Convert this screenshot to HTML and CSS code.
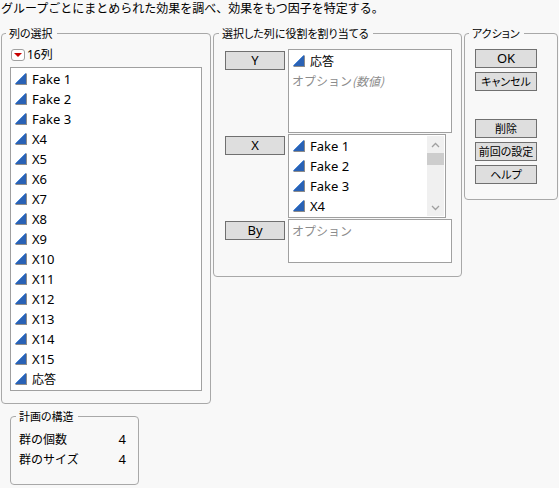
FILE: index.html
```
<!DOCTYPE html>
<html lang="ja">

<head>
    <meta charset="UTF-8">
    <meta name="viewport" content="width=device-width, initial-scale=1.0">
    <title>効果の選別</title>
    <link rel="stylesheet" href="styles.css">
</head>

<body>
    <!-- 連続尺度の三角アイコン -->
    <svg class="defs" width="0" height="0">
        <symbol id="tri" viewBox="0 0 12 12">
            <path d="M12 0V12H0z" fill="#8c8c8c" />
            <path d="M11 0V11H0z" fill="#2a62b5" />
            <path d="M0.5 10.5L10.5 0.5" stroke="#4b87d6" fill="none" />
        </symbol>
    </svg>

    <p class="intro">グループごとにまとめられた効果を調べ、効果をもつ因子を特定する。</p>

    <div class="main">
        <fieldset class="group select">
            <legend>列の選択</legend>
            <div class="count">
                <button class="menu" type="button" aria-label="列のメニュー">
                    <svg width="8" height="4" viewBox="0 0 8 4"><path d="M0 0H8L4 4z" fill="#c80000" /></svg>
                </button>
                <span>16列</span>
            </div>
            <ul class="list">
                <li><svg class="icon"><use href="#tri" /></svg>Fake 1</li>
                <li><svg class="icon"><use href="#tri" /></svg>Fake 2</li>
                <li><svg class="icon"><use href="#tri" /></svg>Fake 3</li>
                <li><svg class="icon"><use href="#tri" /></svg>X4</li>
                <li><svg class="icon"><use href="#tri" /></svg>X5</li>
                <li><svg class="icon"><use href="#tri" /></svg>X6</li>
                <li><svg class="icon"><use href="#tri" /></svg>X7</li>
                <li><svg class="icon"><use href="#tri" /></svg>X8</li>
                <li><svg class="icon"><use href="#tri" /></svg>X9</li>
                <li><svg class="icon"><use href="#tri" /></svg>X10</li>
                <li><svg class="icon"><use href="#tri" /></svg>X11</li>
                <li><svg class="icon"><use href="#tri" /></svg>X12</li>
                <li><svg class="icon"><use href="#tri" /></svg>X13</li>
                <li><svg class="icon"><use href="#tri" /></svg>X14</li>
                <li><svg class="icon"><use href="#tri" /></svg>X15</li>
                <li><svg class="icon"><use href="#tri" /></svg><span class="ja">応答</span></li>
            </ul>
        </fieldset>

        <fieldset class="group roles">
            <legend>選択した列に役割を割り当てる</legend>
            <div class="role">
                <button class="btn" type="button">Y</button>
                <ul class="list tall">
                    <li><svg class="icon"><use href="#tri" /></svg><span class="ja">応答</span></li>
                    <li class="hint ja">オプション<i>(数値)</i></li>
                </ul>
            </div>
            <div class="role">
                <button class="btn" type="button">X</button>
                <div class="list tall scroll">
                    <ul class="items">
                        <li><svg class="icon"><use href="#tri" /></svg>Fake 1</li>
                        <li><svg class="icon"><use href="#tri" /></svg>Fake 2</li>
                        <li><svg class="icon"><use href="#tri" /></svg>Fake 3</li>
                        <li><svg class="icon"><use href="#tri" /></svg>X4</li>
                    </ul>
                    <div class="bar">
                        <button type="button" aria-label="上へ">
                            <svg width="9" height="6" viewBox="0 0 9 6"><path d="M1 5L4.5 1.5L8 5" /></svg>
                        </button>
                        <div class="thumb"></div>
                        <button class="down" type="button" aria-label="下へ">
                            <svg width="9" height="6" viewBox="0 0 9 6"><path d="M1 1L4.5 4.5L8 1" /></svg>
                        </button>
                    </div>
                </div>
            </div>
            <div class="role">
                <button class="btn" type="button">By</button>
                <ul class="list short">
                    <li class="hint ja">オプション</li>
                </ul>
            </div>
        </fieldset>

        <fieldset class="group actions">
            <legend>アクション</legend>
            <div class="btns">
                <button class="btn" type="button">OK</button>
                <button class="btn label" type="button">キャンセル</button>
            </div>
            <div class="btns">
                <button class="btn label" type="button">削除</button>
                <button class="btn label" type="button">前回の設定</button>
                <button class="btn label" type="button">ヘルプ</button>
            </div>
        </fieldset>
    </div>

    <fieldset class="group design">
        <legend>計画の構造</legend>
        <table>
            <tr>
                <th scope="row">群の個数</th>
                <td>4</td>
            </tr>
            <tr>
                <th scope="row">群のサイズ</th>
                <td>4</td>
            </tr>
        </table>
    </fieldset>
</body>

</html>
```

FILE: styles.css
```
* {
    box-sizing: border-box;
}

body,
p,
ul,
li,
fieldset,
legend {
    margin: 0;
    padding: 0;
    list-style: none;
}

body {
    padding: 0 1px;
    background: #f8f8f8;
    color: #000;
    font: 13px/20px "Noto Sans", "Noto Sans CJK JP", sans-serif;
}

button {
    margin: 0;
    padding: 0;
    font: inherit;
    color: inherit;
}

.defs {
    display: block;
}

.ja,
.intro,
th {
    font-family: "Noto Sans CJK JP", sans-serif;
    font-size: 12px;
}

/* 日本語のプロポーショナル字形 */
legend,
.label {
    font-family: "Noto Sans CJK JP", sans-serif;
    font-size: 11px;
    font-feature-settings: "palt";
}

.intro {
    height: 25px;
    line-height: 16px;
    white-space: nowrap;
}

.main {
    display: grid;
    grid-template-columns: 210fr 249fr 94fr;
    gap: 2px;
    align-items: start;
}

.group {
    min-width: 0;
    border: 1px solid #a8a8a8;
    border-radius: 4px;
}

legend {
    padding: 0 4px 0 3px;
    line-height: 16px;
    white-space: nowrap;
}

/* 列の選択 */
.select {
    padding: 4px 8px 12px;
}

.select legend {
    margin-left: -4px;
}

.count {
    display: flex;
    align-items: center;
    gap: 2px;
    margin-bottom: 2px;
    font-size: 12px;
}

.menu {
    display: flex;
    flex: none;
    align-items: center;
    justify-content: center;
    width: 14px;
    height: 12px;
    margin-left: 1px;
    border: 1px solid #a0a0a0;
    border-radius: 3px;
    background: #fff;
}

.list {
    padding: 1px;
    border: 1px solid #a0a0a0;
    background: #fff;
}

.list li {
    display: flex;
    align-items: center;
    height: 20px;
    padding-left: 3px;
}

.icon {
    width: 12px;
    height: 12px;
    margin-right: 5px;
}

.list .hint {
    padding-left: 2px;
    color: #8c8c8c;
}

/* 役割 */
.roles {
    display: grid;
    gap: 1px;
    padding: 8px 9px 13px 11px;
}

.roles legend {
    margin-left: -6px;
}

.role {
    display: flex;
    align-items: flex-start;
    gap: 3px;
}

.role .btn {
    flex: none;
    width: 60px;
    margin-top: 2px;
}

.role .list {
    flex: 1;
}

.tall {
    height: 84px;
}

.short {
    height: 44px;
}

.role .scroll {
    display: flex;
    margin-right: 6px;
}

.items {
    flex: 1;
}

.bar {
    display: flex;
    flex-direction: column;
    width: 17px;
    background: #f0f0f0;
}

.bar button {
    display: flex;
    align-items: center;
    justify-content: center;
    height: 17px;
    border: 0;
    background: none;
}

.bar path {
    fill: none;
    stroke: #a0a0a0;
    stroke-width: 1.3;
}

.bar .down {
    margin-top: auto;
}

.thumb {
    height: 12px;
    background: #cdcdcd;
}

.btn {
    display: block;
    height: 19px;
    border: 1px solid #707070;
    background: #dedede;
    line-height: 17px;
    text-align: center;
    white-space: nowrap;
}

/* アクション */
.actions {
    display: grid;
    gap: 28px;
    padding: 8px 20px 15px 10px;
}

.actions legend {
    margin-left: -6px;
}

.btns {
    display: grid;
    gap: 4px;
}

/* 計画の構造 */
.design {
    width: 129px;
    margin: 4px 0 0 9px;
    padding: 5px 12px 15px 8px;
}

.design legend {
    margin-left: -3px;
}

table {
    width: 100%;
    border-collapse: collapse;
}

th,
td {
    height: 20px;
    padding: 0;
    font-weight: normal;
    text-align: left;
}

td {
    text-align: right;
}
```
